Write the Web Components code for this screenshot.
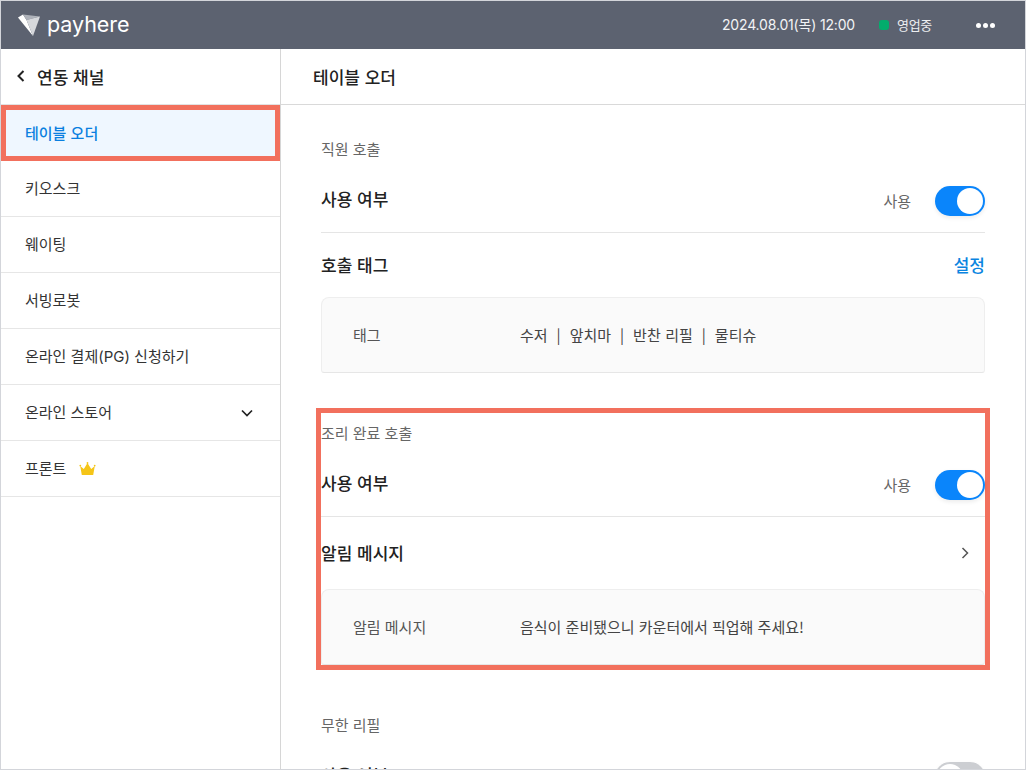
<!DOCTYPE html>
<html lang="ko">
<head>
<meta charset="utf-8">
<title>payhere</title>
<style>
  html, body { margin: 0; height: 100%; overflow: hidden; background: #fff; }
  body { font-family: "Noto Sans CJK KR", "Noto Sans", sans-serif; }
</style>
</head>
<body>
<pay-app>
  <pay-header slot="header" date="2024.08.01(목) 12:00" status="영업중"></pay-header>
  <pay-sidebar slot="sidebar" title="연동 채널">
    <pay-nav-item active>테이블 오더</pay-nav-item>
    <pay-nav-item>키오스크</pay-nav-item>
    <pay-nav-item>웨이팅</pay-nav-item>
    <pay-nav-item>서빙로봇</pay-nav-item>
    <pay-nav-item>온라인 결제<span>(PG)</span> 신청하기</pay-nav-item>
    <pay-nav-item expandable>온라인 스토어</pay-nav-item>
    <pay-nav-item crown>프론트</pay-nav-item>
  </pay-sidebar>
  <pay-main slot="main" title="테이블 오더">
    <pay-section label="직원 호출">
      <pay-row title="사용 여부" divided><pay-toggle on>사용</pay-toggle></pay-row>
      <pay-row title="호출 태그"><pay-link>설정</pay-link></pay-row>
      <pay-card key="태그" spaced>수저 &nbsp;|&nbsp; 앞치마 &nbsp;|&nbsp; 반찬 리필 &nbsp;|&nbsp; 물티슈</pay-card>
    </pay-section>
    <pay-section label="조리 완료 호출" marked>
      <pay-row title="사용 여부" divided><pay-toggle on>사용</pay-toggle></pay-row>
      <pay-row title="알림 메시지" tall><pay-arrow></pay-arrow></pay-row>
      <pay-card key="알림 메시지">음식이 준비됐으니 카운터에서 픽업해 주세요!</pay-card>
    </pay-section>
    <pay-section label="무한 리필">
      <pay-row title="사용 여부" divided><pay-toggle></pay-toggle></pay-row>
    </pay-section>
  </pay-main>
</pay-app>

<script>
function shadow(el, html) {
  el.attachShadow({ mode: 'open' }).innerHTML = html;
}

class PayApp extends HTMLElement {
  constructor() {
    super();
    shadow(this, `
    <style>
      :host { display: grid; grid-template-columns: 280px 1fr; grid-template-rows: 48px 1fr;
        box-sizing: border-box; height: 770px; border: 1px solid #d3d5da; overflow: hidden; color: #222; }
      .top { grid-column: 1 / 3; }
    </style>
    <div class="top"><slot name="header"></slot></div>
    <slot name="sidebar"></slot>
    <slot name="main"></slot>`);
  }
}

class PayHeader extends HTMLElement {
  connectedCallback() {
    if (this.shadowRoot) return;
    shadow(this, `
    <style>
      :host { display: flex; align-items: center; height: 48px; background: #5c6270; color: #fff; padding: 0 30px 0 17px; }
      .logo { display: block; margin-right: 6px; margin-top: 1px; }
      .name { font: 400 21.5px/1 Inter, sans-serif; letter-spacing: -.05px; flex: 1; margin-top: -1px; }
      .date { font: 400 14px/1 Inter, "Noto Sans CJK KR", sans-serif; letter-spacing: -.17px; color: #f2f3f5; }
      .status { display: flex; align-items: center; margin-left: 24px; font-size: 13px; color: #eceef0; letter-spacing: -.3px; padding-bottom: 2px; }
      .dot { width: 10px; height: 10px; border-radius: 3px; background: #03ac6c; margin-right: 8px; margin-top: 2px; }
      .more { display: flex; gap: 2px; margin-left: 44px; }
      .more i { width: 5px; height: 5px; border-radius: 50%; background: #fff; }
    </style>
    <svg class="logo" width="23" height="23" viewBox="0 0 23 23">
      <path d="M0 3.5 L5 0.5 L8.5 6 L15 22 Z" fill="#fff"/>
      <path d="M5 0.5 L22 2.5 L8.5 6 Z" fill="#aeb2ba"/>
      <path d="M8.5 6 L22 2.5 L15 22 Z" fill="#d6d8dc"/>
    </svg>
    <span class="name">payhere</span>
    <span class="date">${this.getAttribute('date')}</span>
    <span class="status"><span class="dot"></span>${this.getAttribute('status')}</span>
    <span class="more"><i></i><i></i><i></i></span>`);
  }
}

class PaySidebar extends HTMLElement {
  connectedCallback() {
    if (this.shadowRoot) return;
    shadow(this, `
    <style>
      :host { display: block; border-right: 1px solid #d6d6d6; box-sizing: border-box; width: 280px; }
      .head { display: flex; align-items: center; gap: 11px; height: 56px; box-sizing: border-box; padding: 0 0 1px 15px; border-bottom: 1px solid #e2e2e2;
        font-size: 17px; font-weight: 500; color: #222; }
      svg { display: block; }
    </style>
    <div class="head">
      <svg width="10" height="14" viewBox="0 0 10 14"><path d="M7.5 2 L2.5 7 L7.5 12" fill="none" stroke="#222" stroke-width="2"/></svg>
      ${this.getAttribute('title')}
    </div>
    <slot></slot>`);
  }
}

class PayNavItem extends HTMLElement {
  connectedCallback() {
    if (this.shadowRoot) return;
    const chevron = this.hasAttribute('expandable')
      ? `<svg class="chev" width="14" height="10" viewBox="0 0 14 10"><path d="M2 2.5 L7 7.5 L12 2.5" fill="none" stroke="#222" stroke-width="1.7"/></svg>` : '';
    const crown = this.hasAttribute('crown')
      ? `<svg class="crown" width="17" height="14" viewBox="0 0 17 14"><circle cx="1.3" cy="3.6" r=".9" fill="#f5c518"/><circle cx="8.5" cy="1" r=".9" fill="#f5c518"/><circle cx="15.7" cy="3.6" r=".9" fill="#f5c518"/><path d="M1.2 4 L4.8 7 L8.5 1 L12.2 7 L15.8 4 L14.2 13 L2.8 13 Z" fill="#f5c518"/></svg>` : '';
    shadow(this, `
    <style>
      :host { display: flex; align-items: center; height: 56px; box-sizing: border-box; padding: 0 24px 2px;
        font-size: 15px; color: #333; border-bottom: 1px solid #e6e6e6; }
      :host([active]) { background: #eff7ff; color: #0a7fe0; font-weight: 500; outline: 5px solid #f2705d; outline-offset: -5px; border-bottom: 0; padding-bottom: 2px; }
      ::slotted(span) { font-family: Inter, sans-serif; }
      .wrap { white-space: pre; }
      .chev { margin-left: auto; margin-right: 2px; margin-top: 2px; }
      .crown { margin-left: 13px; margin-top: 2px; }
    </style>
    <span class="wrap"><slot></slot></span>${chevron}${crown}`);
  }
}

class PayMain extends HTMLElement {
  connectedCallback() {
    if (this.shadowRoot) return;
    shadow(this, `
    <style>
      :host { display: block; min-width: 0; }
      .head { height: 56px; box-sizing: border-box; padding: 0 32px 1px; display: flex; align-items: center;
        font-size: 17px; font-weight: 500; border-bottom: 1px solid #d9d9d9; }
      .body { padding: 32px 40px 0 40px; display: flex; flex-direction: column; gap: 48px; }
    </style>
    <div class="head">${this.getAttribute('title')}</div>
    <div class="body"><slot></slot></div>`);
  }
}

class PaySection extends HTMLElement {
  connectedCallback() {
    if (this.shadowRoot) return;
    shadow(this, `
    <style>
      :host { display: block; }
      :host([marked]) { outline: 5px solid #f2705d; padding-top: 8px; margin-top: -8px; }
      .label { height: 24px; line-height: 24px; font-size: 15px; color: #666; margin-bottom: 8px; }
    </style>
    <div class="label">${this.getAttribute('label')}</div>
    <slot></slot>`);
  }
}

class PayRow extends HTMLElement {
  connectedCallback() {
    if (this.shadowRoot) return;
    shadow(this, `
    <style>
      :host { display: flex; align-items: center; justify-content: space-between; height: 64px; box-sizing: border-box; }
      :host([divided]) { border-bottom: 1px solid #e5e5e5; }
      :host([tall]) { height: 72px; }
      .title { font-size: 17px; font-weight: 500; color: #222; margin-bottom: 2px; }
      :host([divided]) .title { margin-bottom: 4px; }
    </style>
    <span class="title">${this.getAttribute('title')}</span>
    <slot></slot>`);
  }
}

class PayToggle extends HTMLElement {
  constructor() {
    super();
    shadow(this, `
    <style>
      :host { display: flex; align-items: center; gap: 24px; font-size: 15px; color: #666; }
      .track { position: relative; width: 50px; height: 30px; border-radius: 15px; background: #ccced2; box-shadow: 0 2px 4px rgba(0,0,0,.08); margin-top: 1px; }
      :host([on]) .track { background: #0a85fb; }
      .knob { position: absolute; top: 2px; left: 2px; width: 26px; height: 26px; border-radius: 50%; background: #fff; }
      :host([on]) .knob { left: 22px; }
    </style>
    <slot></slot><span class="track"><span class="knob"></span></span>`);
  }
}

class PayLink extends HTMLElement {
  constructor() {
    super();
    shadow(this, `
    <style>:host { display: block; font-size: 17px; font-weight: 500; color: #0a84e0; padding-bottom: 2px; }</style>
    <slot></slot>`);
  }
}

class PayArrow extends HTMLElement {
  constructor() {
    super();
    shadow(this, `
    <style>:host { display: block; margin-right: 13px; } svg { display: block; }</style>
    <svg width="14" height="14" viewBox="0 0 14 14"><path d="M4.5 2 L9.5 7 L4.5 12" fill="none" stroke="#555" stroke-width="1.5"/></svg>`);
  }
}

class PayCard extends HTMLElement {
  connectedCallback() {
    if (this.shadowRoot) return;
    shadow(this, `
    <style>
      :host { display: grid; grid-template-columns: 167px 1fr; align-items: center; height: 76px; box-sizing: border-box; padding: 0 31px 2px;
        background: #fafafa; border: 1px solid #eeeeee; border-bottom-color: #e6e6e6; border-radius: 8px 8px 3px 3px; font-size: 15px; color: #555; }
      .val { color: #444; }
      :host([spaced]) .val { word-spacing: .3px; }
    </style>
    <span>${this.getAttribute('key')}</span>
    <span class="val"><slot></slot></span>`);
  }
}

customElements.define('pay-app', PayApp);
customElements.define('pay-header', PayHeader);
customElements.define('pay-sidebar', PaySidebar);
customElements.define('pay-nav-item', PayNavItem);
customElements.define('pay-main', PayMain);
customElements.define('pay-section', PaySection);
customElements.define('pay-row', PayRow);
customElements.define('pay-toggle', PayToggle);
customElements.define('pay-link', PayLink);
customElements.define('pay-arrow', PayArrow);
customElements.define('pay-card', PayCard);
</script>
</body>
</html>
